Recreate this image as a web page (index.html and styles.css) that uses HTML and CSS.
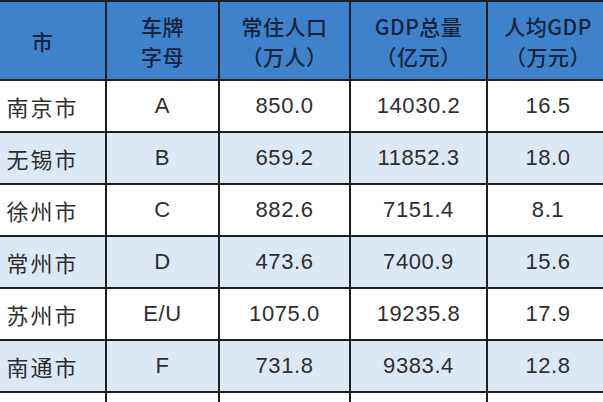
FILE: index.html
```html
<!DOCTYPE html>
<html lang="zh">
<head>
<meta charset="utf-8">
<title>江苏城市车牌与GDP</title>
<link rel="stylesheet" href="styles.css">
</head>
<body>
<table class="data">
  <colgroup>
    <col class="c-city">
    <col class="c-plate">
    <col class="c-pop">
    <col class="c-gdp">
    <col class="c-per">
  </colgroup>
  <thead>
    <tr class="head">
      <th>市</th>
      <th>车牌<br>字母</th>
      <th>常住人口<br>（万人）</th>
      <th>GDP总量<br>（亿元）</th>
      <th>人均GDP<br>（万元）</th>
    </tr>
  </thead>
  <tbody>
    <tr class="row"><td class="city">南京市</td><td>A</td><td>850.0</td><td>14030.2</td><td>16.5</td></tr>
    <tr class="row alt"><td class="city">无锡市</td><td>B</td><td>659.2</td><td>11852.3</td><td>18.0</td></tr>
    <tr class="row"><td class="city">徐州市</td><td>C</td><td>882.6</td><td>7151.4</td><td>8.1</td></tr>
    <tr class="row alt"><td class="city">常州市</td><td>D</td><td>473.6</td><td>7400.9</td><td>15.6</td></tr>
    <tr class="row"><td class="city">苏州市</td><td>E/U</td><td>1075.0</td><td>19235.8</td><td>17.9</td></tr>
    <tr class="row alt"><td class="city">南通市</td><td>F</td><td>731.8</td><td>9383.4</td><td>12.8</td></tr>
    <tr class="row"><td class="city">&nbsp;</td><td>&nbsp;</td><td>&nbsp;</td><td>&nbsp;</td><td>&nbsp;</td></tr>
  </tbody>
</table>
</body>
</html>
```
FILE: styles.css
```css
html, body {
  margin: 0;
  padding: 0;
  background: #ffffff;
  overflow: hidden;
}

.data {
  border-collapse: collapse;
  table-layout: fixed;
  width: 630px;
  margin-left: -22px;
  font-family: "Liberation Sans", "Noto Sans CJK SC", sans-serif;
}

.c-city { width: 127px; }
.c-plate { width: 113px; }
.c-pop { width: 131px; }
.c-gdp { width: 137px; }
.c-per { width: 122px; }

.data th,
.data td {
  border: 2px solid #1e1f22;
  text-align: center;
  vertical-align: middle;
  padding: 0;
}

.head {
  height: 79px;
  background: #3f82cc;
}

.head th {
  font-family: "Noto Sans CJK SC", sans-serif;
  font-weight: 500;
  font-size: 21px;
  line-height: 30px;
  color: #15233d;
  letter-spacing: 0.5px;
}

.row {
  height: 52px;
  background: #ffffff;
}

.row.alt {
  background: #dde8f5;
}

.row td {
  font-size: 22px;
  line-height: 26px;
  color: #2e2e2e;
  letter-spacing: 0.6px;
}

.row td.city {
  font-family: "Noto Sans CJK SC", sans-serif;
  font-size: 22px;
  letter-spacing: 2px;
}
```
